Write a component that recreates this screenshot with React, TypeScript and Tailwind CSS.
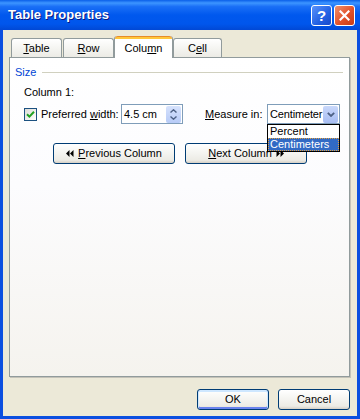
import React from "react";

const font = "font-['Liberation_Sans','DejaVu_Sans',Arial,sans-serif]";

function Arrows({ dir }: { dir: "left" | "right" }) {
  return (
    <svg width="8" height="7" viewBox="0 0 8 7" className="shrink-0">
      {dir === "left" ? (
        <>
          <polygon points="3.5,0 0,3.5 3.5,7" fill="#000" />
          <polygon points="7.5,0 4,3.5 7.5,7" fill="#000" />
        </>
      ) : (
        <>
          <polygon points="0.5,0 4,3.5 0.5,7" fill="#000" />
          <polygon points="4.5,0 8,3.5 4.5,7" fill="#000" />
        </>
      )}
    </svg>
  );
}

function XpButton({
  children,
  className = "",
  isDefault = false,
}: {
  children: React.ReactNode;
  className?: string;
  isDefault?: boolean;
}) {
  return (
    <div
      className={`flex items-center justify-center rounded-[3px] border border-[#003c74] bg-[linear-gradient(to_bottom,#ffffff_0%,#f6f6f3_40%,#ecebe5_85%,#d6d0c5_100%)] text-[11px] text-black ${
        isDefault ? "shadow-[inset_0_1px_0_1px_#cee7ff,inset_0_-1px_0_1px_#6982ee]" : ""
      } ${className}`}
    >
      {children}
    </div>
  );
}

function Tab({ label, ul, selected = false, className = "" }: { label: string; ul: number; selected?: boolean; className?: string }) {
  const text = (
    <span>
      {label.slice(0, ul)}
      <u className="underline-offset-[1px]">{label[ul]}</u>
      {label.slice(ul + 1)}
    </span>
  );
  if (selected) {
    return (
      <div
        className={`relative z-10 -mb-px flex h-[22px] flex-col rounded-t-[3px] border-x border-[#919b9c] bg-white ${className}`}
      >
        <div className="h-[3px] rounded-t-[3px] border-t border-[#e68b2c] bg-[#ffc73c]" />
        <div className="flex flex-1 items-center justify-center text-[11px] text-black">{text}</div>
      </div>
    );
  }
  return (
    <div
      className={`flex h-[19px] items-center justify-center rounded-t-[3px] border-x border-t border-[#919b9c] bg-[linear-gradient(to_bottom,#ffffff,#f3f3ef_60%,#ecebe5)] text-[11px] text-black ${className}`}
    >
      {text}
    </div>
  );
}

export default function App() {
  return (
    <div className={`flex h-[419px] w-[360px] flex-col ${font}`}>
      {/* title bar */}
      <div className="flex h-[30px] items-center bg-[linear-gradient(to_bottom,#0a5fe9_0%,#3d95ff_10%,#1a6ff6_22%,#0058ee_50%,#0056ec_80%,#0148d5_100%)] pl-[8px] pr-[5px]">
        <div className="flex-1 text-[13px] font-bold text-white [text-shadow:1px_1px_0_#0a1883]">Table Properties</div>
        <div className="flex gap-[2px]">
          <div className="flex h-[21px] w-[21px] items-center justify-center rounded-[3px] border border-white bg-[linear-gradient(135deg,#5a93fb,#2260e3_60%,#1848c9)] text-[15px] font-bold leading-none text-white">
            ?
          </div>
          <div className="flex h-[21px] w-[21px] items-center justify-center rounded-[3px] border border-white bg-[linear-gradient(135deg,#f0906c,#e2512a_55%,#c63b15)]">
            <svg width="11" height="11" viewBox="0 0 11 11">
              <path d="M1.5 1.5 L9.5 9.5 M9.5 1.5 L1.5 9.5" stroke="#fff" strokeWidth="2.2" strokeLinecap="square" />
            </svg>
          </div>
        </div>
      </div>

      {/* body */}
      <div className="flex flex-1 flex-col border-x-[3px] border-b-[3px] border-[#0b4fe0] bg-[#ece9d8] pl-[6px] pr-[7px] pt-[6px]">
        {/* tabs */}
        <div className="flex h-[21px] items-end pl-[2px]">
          <Tab label="Table" ul={0} className="w-[51px]" />
          <Tab label="Row" ul={0} className="ml-[1px] w-[51px]" />
          <Tab label="Column" ul={4} selected className="w-[59px]" />
          <Tab label="Cell" ul={1} className="w-[49px]" />
        </div>

        {/* panel */}
        <div className="flex h-[320px] flex-col border border-[#919b9c] bg-[linear-gradient(to_bottom,#ffffff,#fcfcfe_40%,#f5f3ee)] pl-[5px] pr-[6px] pt-[8px] shadow-[1px_1px_0_#c4c2b8] text-[11px] text-black">
          {/* group header */}
          <div className="flex h-[13px] items-center gap-[6px]">
            <span className="text-[#0046d5]">Size</span>
            <div className="h-px flex-1 bg-[#d0d0bf]" />
          </div>

          <div className="ml-[9px] mt-[7px] flex h-[13px] items-center">Column 1:</div>

          {/* controls row */}
          <div className="ml-[9px] mt-[5px] flex h-[20px] items-center">
            <div className="flex h-[13px] w-[13px] items-center justify-center border border-[#1c5180] bg-[linear-gradient(135deg,#dcdcd7,#ffffff)]">
              <svg width="9" height="9" viewBox="0 0 9 9">
                <path d="M1 4.2 L3.4 6.6 L8 1.8" fill="none" stroke="#21a121" strokeWidth="2" />
              </svg>
            </div>
            <span className="ml-[4px] w-[80px]">
              Preferred <u className="underline-offset-[1px]">w</u>idth:
            </span>
            <div className="flex h-[20px] w-[62px] items-center border border-[#7f9db9] bg-white pl-[2px] pr-px">
              <span className="flex-1">4.5 cm</span>
              <div className="flex h-[17px] w-[15px] flex-col items-center justify-center gap-[3px] rounded-[2px] bg-[linear-gradient(to_bottom,#d6e2fc,#b7cbf7)]">
                <svg width="7" height="4" viewBox="0 0 7 4">
                  <path d="M0.5 3.5 L3.5 0.8 L6.5 3.5" fill="none" stroke="#4d6185" strokeWidth="1.4" />
                </svg>
                <svg width="7" height="4" viewBox="0 0 7 4">
                  <path d="M0.5 0.5 L3.5 3.2 L6.5 0.5" fill="none" stroke="#4d6185" strokeWidth="1.4" />
                </svg>
              </div>
            </div>
            <span className="ml-[22px] w-[62px]">
              <u className="underline-offset-[1px]">M</u>easure in:
            </span>
            <div className="relative h-[20px] w-[73px]">
              <div className="flex h-full items-center border border-[#7f9db9] bg-white pl-[2px] pr-px">
                <span className="flex-1 whitespace-nowrap tracking-[-0.15px]">Centimeter</span>
                <div className="flex h-[17px] w-[15px] shrink-0 items-center justify-center rounded-[2px] bg-[linear-gradient(to_bottom,#c9d8fb,#a7bdf2)]">
                  <svg width="8" height="5" viewBox="0 0 8 5">
                    <path d="M0.8 0.8 L4 4 L7.2 0.8" fill="none" stroke="#4d6185" strokeWidth="1.8" />
                  </svg>
                </div>
              </div>
              <div className="absolute left-0 top-full z-20 w-full border border-black bg-white">
                <div className="flex h-[13px] items-center pl-[2px]">Percent</div>
                <div className="flex h-[13px] items-center border border-dotted border-[#e0a040] bg-[#316ac5] pl-px text-white">
                  Centimeters
                </div>
              </div>
            </div>
          </div>

          {/* nav buttons */}
          <div className="ml-[38px] mt-[19px] flex gap-[10px]">
            <XpButton className="h-[21px] w-[122px] gap-[4px]">
              <Arrows dir="left" />
              <span>
                <u className="underline-offset-[1px]">P</u>revious Column
              </span>
            </XpButton>
            <XpButton className="h-[21px] w-[122px] gap-[4px]">
              <span>
                <u className="underline-offset-[1px]">N</u>ext Column
              </span>
              <Arrows dir="right" />
            </XpButton>
          </div>
        </div>

        {/* dialog buttons */}
        <div className="mt-[12px] flex justify-end gap-[9px]">
          <XpButton isDefault className="h-[21px] w-[72px]">OK</XpButton>
          <XpButton className="h-[21px] w-[72px]">Cancel</XpButton>
        </div>
      </div>
    </div>
  );
}
